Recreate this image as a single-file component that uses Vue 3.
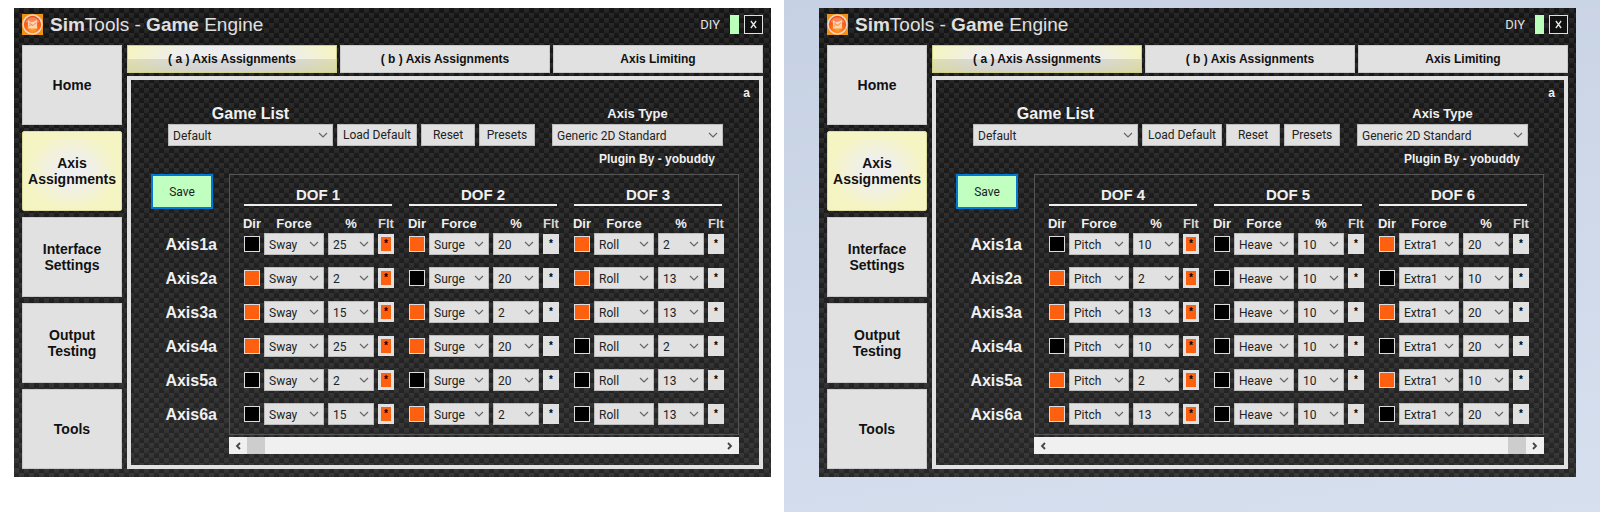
<script setup>
const sections = ['Home', 'Axis Assignments', 'Interface Settings', 'Output Testing', 'Tools']
const tabs = ['( a ) Axis Assignments', '( b ) Axis Assignments', 'Axis Limiting']
const axes = ['Axis1a', 'Axis2a', 'Axis3a', 'Axis4a', 'Axis5a', 'Axis6a']

// dir: one digit per axis, 1 = reversed
const windows = [
  {
    id: 'left',
    dofs: [
      { name: 'DOF 1', force: 'Sway', dir: '011100', percent: [25, 2, 15, 25, 2, 15], filtered: true },
      { name: 'DOF 2', force: 'Surge', dir: '101101', percent: [20, 20, 2, 20, 20, 2], filtered: false },
      { name: 'DOF 3', force: 'Roll', dir: '111000', percent: [2, 13, 13, 2, 13, 13], filtered: false },
    ],
  },
  {
    id: 'right',
    dofs: [
      { name: 'DOF 4', force: 'Pitch', dir: '011011', percent: [10, 2, 13, 10, 2, 13], filtered: true },
      { name: 'DOF 5', force: 'Heave', dir: '000000', percent: [10, 10, 10, 10, 10, 10], filtered: false },
      { name: 'DOF 6', force: 'Extra1', dir: '101010', percent: [20, 10, 20, 20, 10, 20], filtered: false },
    ],
  },
]
</script>

<template>
  <main class="page">
    <div v-for="w in windows" :key="w.id" class="pane" :class="w.id">
      <section class="window">
        <header class="titlebar">
          <svg class="logo" viewBox="0 0 21 21" aria-hidden="true">
            <defs>
              <radialGradient :id="'glow-' + w.id" cx="50%" cy="75%" r="70%">
                <stop offset="0" stop-color="#ffa629" />
                <stop offset="0.55" stop-color="#fb6417" />
                <stop offset="1" stop-color="#ee4a12" />
              </radialGradient>
            </defs>
            <rect width="21" height="21" fill="#f09216" />
            <circle cx="10.5" cy="10.5" r="9.4" :fill="`url(#glow-${w.id})`" stroke="#ecd9cf" stroke-width="1.5" />
            <path d="M3.500 8a7.500 7.500 0 0 1 14 0q-7 3-14 0z" fill="#fff" opacity=".28" />
            <path d="M6 6l2.500 2 2.500 0 4-2v8.500h-9z" fill="#ffe0ca" opacity=".85" />
            <path d="M7 12.500l2-2 2 1 3-3M8 8.500v2" fill="none" stroke="#fb7a3a" stroke-width="1" />
          </svg>
          <h1><b>Sim</b>Tools - <b>Game</b> Engine</h1>
          <span class="mode">DIY</span>
          <span class="status"></span>
          <button class="close" type="button" aria-label="Close">
            <svg viewBox="0 0 8 10" aria-hidden="true"><path d="M1 1l6 8M7 1L1 9" /></svg>
          </button>
        </header>

        <div class="main">
          <nav class="sidebar">
            <button v-for="(s, i) in sections" :key="s" type="button" :class="{ active: i === 1 }">{{ s }}</button>
          </nav>

          <div class="content">
            <nav class="tabs">
              <button v-for="(t, i) in tabs" :key="t" type="button" :class="{ active: i === 0 }">{{ t }}</button>
            </nav>

            <div class="panel">
              <div class="page-mark">a</div>
              <div class="toolbar">
                <label class="game-label" :for="'game-' + w.id">Game List</label>
                <label class="type-label" :for="'type-' + w.id">Axis Type</label>
                <span class="combo game">
                  <select :id="'game-' + w.id"><option>Default</option></select>
                  <svg viewBox="0 0 10 6" aria-hidden="true"><path d="M1 1l4 4 4-4" /></svg>
                </span>
                <button type="button">Load Default</button>
                <button type="button">Reset</button>
                <button type="button">Presets</button>
                <span class="combo type">
                  <select :id="'type-' + w.id"><option>Generic 2D Standard</option></select>
                  <svg viewBox="0 0 10 6" aria-hidden="true"><path d="M1 1l4 4 4-4" /></svg>
                </span>
              </div>
              <p class="credit">Plugin By - yobuddy</p>

              <div class="body">
                <div class="axis-column">
                  <button class="save" type="button">Save</button>
                  <div class="axis-names">
                    <span v-for="a in axes" :key="a">{{ a }}</span>
                  </div>
                </div>

                <div class="matrix">
                  <div class="dofs">
                    <section v-for="d in w.dofs" :key="d.name" class="dof">
                      <h2>{{ d.name }}</h2>
                      <div class="line heads">
                        <span>Dir</span><span>Force</span><span>%</span><span class="light">Flt</span>
                      </div>
                      <div v-for="(a, i) in axes" :key="a" class="line">
                        <input type="checkbox" :checked="d.dir[i] === '1'" :aria-label="`${d.name} ${a} direction`" />
                        <span class="combo">
                          <select :aria-label="`${d.name} ${a} force`"><option>{{ d.force }}</option></select>
                          <svg viewBox="0 0 10 6" aria-hidden="true"><path d="M1 1l4 4 4-4" /></svg>
                        </span>
                        <span class="combo">
                          <select :aria-label="`${d.name} ${a} percent`"><option>{{ d.percent[i] }}</option></select>
                          <svg viewBox="0 0 10 6" aria-hidden="true"><path d="M1 1l4 4 4-4" /></svg>
                        </span>
                        <button
                          class="filter"
                          type="button"
                          :class="{ on: d.filtered }"
                          :aria-pressed="d.filtered"
                          :aria-label="`${d.name} ${a} filter`"
                        >*</button>
                      </div>
                    </section>
                  </div>
                  <div class="scrollbar">
                    <button type="button" aria-label="Scroll left">
                      <svg viewBox="0 0 6 8" aria-hidden="true"><path d="M5 1L2 4l3 3" /></svg>
                    </button>
                    <span class="track"><span class="thumb"></span></span>
                    <button type="button" aria-label="Scroll right">
                      <svg viewBox="0 0 6 8" aria-hidden="true"><path d="M1 1l3 3-3 3" /></svg>
                    </button>
                  </div>
                </div>
              </div>
            </div>
          </div>
        </div>
      </section>
    </div>
  </main>
</template>

<style>
body {
  margin: 0;
}
</style>

<style scoped>
.page {
  display: grid;
  grid-template-columns: 49fr 51fr;
  min-height: 100vh;
  font-family: "Liberation Sans", Arial, sans-serif;
}
.page *,
.page *::before {
  box-sizing: border-box;
}
.pane {
  padding: 8px 13px 36px 14px;
  background: #fff;
}
.pane.right {
  padding: 8px 24px 36px 35px;
  background: linear-gradient(170deg, #c6d1e3, #d7e0ef);
}
button {
  padding: 0;
  border: 0;
  color: #111;
  font: inherit;
}
.window {
  padding: 6px 8px 8px;
  background:
    linear-gradient(rgba(255, 255, 255, 0), rgba(255, 255, 255, 0.08)),
    repeating-linear-gradient(rgba(0, 0, 0, 0), rgba(0, 0, 0, 0.2) 50%),
    repeating-conic-gradient(#181818 0 25%, #2a2a2a 0 50%);
  background-size: 100% 100%, 10px 10px, 10px 10px;
}
.titlebar {
  display: flex;
  align-items: center;
  height: 21px;
  margin-bottom: 10px;
  color: #e0e0e0;
}
.logo {
  width: 21px;
  height: 21px;
  margin-right: 7px;
}
h1 {
  flex: 1;
  margin: 0;
  font-size: 19px;
  font-weight: 400;
  line-height: 24px;
}
.mode {
  font: 13px Roboto, sans-serif;
}
.status {
  width: 9px;
  height: 19px;
  margin: 0 5px 0 10px;
  background: #baffba;
}
.close {
  display: grid;
  place-items: center;
  width: 19px;
  height: 19px;
  border: 1px solid #e0e0e0;
  background: #111;
}
.close svg {
  width: 7px;
  height: 9px;
  fill: none;
  stroke: #e6e6e6;
  stroke-width: 1.5;
}
.main {
  display: grid;
  grid-template-columns: 100px 1fr;
  gap: 5px;
}
.sidebar {
  display: flex;
  flex-direction: column;
  gap: 6px;
}
.sidebar button {
  flex: 1;
  border: 1px solid #c9c9c9;
  background: #e1e1e1;
  font-size: 14px;
  font-weight: 700;
  line-height: 16px;
}
.sidebar .active {
  border-color: #dcdc9e;
  border-radius: 2px;
  background: radial-gradient(ellipse 46px 38px at center, #efefef 30%, #f5f4c3 100%);
}
.tabs {
  display: grid;
  grid-template-columns: repeat(3, 1fr);
  gap: 3px;
  height: 28px;
  margin-bottom: 3px;
}
.tabs button {
  border: 1px solid #c9c9c9;
  background: #e1e1e1;
  font-size: 12px;
  font-weight: 700;
}
.tabs .active {
  border: 1px solid #d0d088;
  background:
    linear-gradient(rgba(0, 0, 0, 0) 50%, rgba(0, 0, 0, 0.09) 50%, rgba(0, 0, 0, 0.12)),
    radial-gradient(ellipse 54% 110% at 50% 45%, #eee 50%, #f6f5be 100%);
}
.panel {
  padding: 3px 20px 11px;
  border: 4px solid #e1e1e1;
  color: #f0f0f0;
}
.page-mark {
  height: 19px;
  margin-right: -11px;
  font-size: 12px;
  font-weight: 700;
  line-height: 20px;
  text-align: right;
}
.toolbar {
  display: grid;
  grid-template-columns: 1fr 80px 54px 56px 9px 171px;
  grid-template-rows: 22px 22px;
  column-gap: 4px;
  padding: 0 16px 0 17px;
}
.toolbar label {
  text-align: center;
  font-weight: 700;
  line-height: 24px;
}
.game-label {
  grid-column: 1;
  font-size: 16px;
}
.type-label {
  grid-column: 6;
  font-size: 13px;
}
.combo.game {
  grid-column: 1;
}
.combo.type {
  grid-column: 6;
}
.toolbar button {
  border: 1px solid #bdbdbd;
  background: #e1e1e1;
  color: #222;
  font: 12px Roboto, sans-serif;
}
.combo {
  display: grid;
  height: 22px;
}
.combo select {
  grid-area: 1 / 1;
  appearance: none;
  width: 100%;
  min-width: 0;
  margin: 0;
  padding: 1px 12px 0 4px;
  border: 1px solid #bdbdbd;
  border-radius: 0;
  background: #e1e1e1;
  color: #222;
  font: 12px Roboto, sans-serif;
}
.combo svg {
  grid-area: 1 / 1;
  place-self: center end;
  width: 10px;
  height: 6px;
  margin-right: 5px;
  fill: none;
  stroke: #666;
  stroke-width: 1.2;
  pointer-events: none;
}
.credit {
  margin: 4px 24px 6px 0;
  font-size: 12px;
  font-weight: 700;
  line-height: 18px;
  text-align: right;
}
.body {
  display: grid;
  grid-template-columns: 78px 1fr;
}
.save {
  display: block;
  width: 62px;
  height: 35px;
  border: 2px solid #0078d7;
  background: #c0ffc0;
  color: #222;
  font: 12px Roboto, sans-serif;
}
.axis-names {
  display: grid;
  gap: 12px;
  padding: 25px 12px 0 0;
  font-size: 16px;
  font-weight: 700;
  line-height: 22px;
  text-align: right;
}
.dofs {
  display: grid;
  grid-template-columns: repeat(3, 1fr);
  gap: 15px;
  padding: 9px 14px;
  border: 1px solid #555;
}
.dof {
  display: grid;
  align-content: start;
}
h2 {
  height: 22px;
  margin: 0 2px 7px 0;
  border-bottom: 2px solid #eee;
  font-size: 15px;
  font-weight: 700;
  line-height: 21px;
  text-align: center;
}
.line {
  display: grid;
  grid-template-columns: 16px 1fr 46px 16px;
  align-items: center;
  gap: 4px;
  height: 22px;
  margin-bottom: 12px;
}
.line:last-child {
  margin-bottom: 0;
}
.heads {
  justify-items: center;
  height: 20px;
  margin-bottom: 0;
  font-size: 13px;
  font-weight: 700;
  white-space: nowrap;
}
.light {
  color: #d8d8d8;
}
.line input {
  appearance: none;
  width: 16px;
  height: 16px;
  margin: 0;
  border: 1px solid #ddd;
  background: #000;
}
.line input:checked {
  background: #ff6010;
}
.filter {
  height: 20px;
  border: 3px solid #e1e1e1;
  background: #e1e1e1;
  color: #000;
  font-size: 10px;
  font-weight: 700;
  line-height: 14px;
}
.filter.on {
  background: #ff6010;
}
.scrollbar {
  display: flex;
  height: 17px;
  margin-top: 2px;
  background: #f0f0f0;
}
.scrollbar button {
  display: grid;
  place-items: center;
  width: 18px;
  background: #f0f0f0;
}
.scrollbar svg {
  width: 6px;
  height: 8px;
  fill: none;
  stroke: #444;
  stroke-width: 1.8;
}
.track {
  display: flex;
  flex: 1;
}
.right .track {
  justify-content: flex-end;
}
.thumb {
  width: 18px;
  background: #cdcdcd;
}
</style>
